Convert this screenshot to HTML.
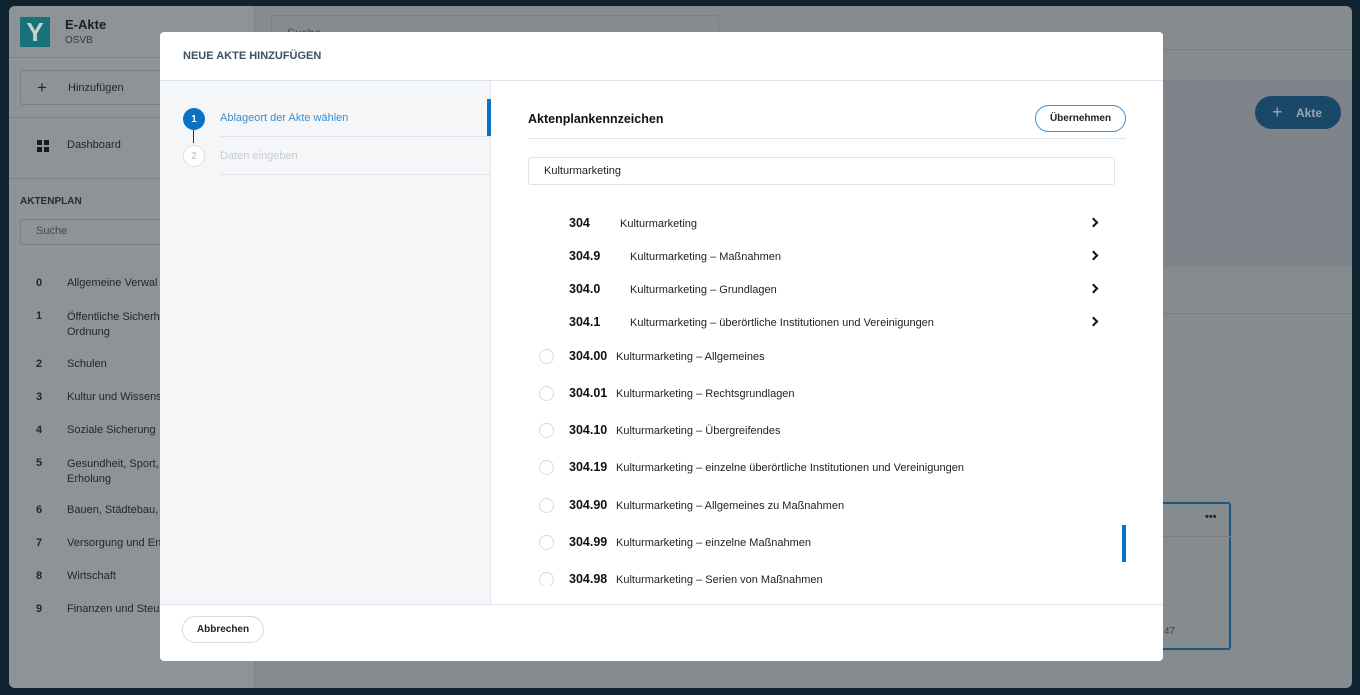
<!DOCTYPE html>
<html><head><meta charset="utf-8"><style>
*{box-sizing:border-box;margin:0;padding:0}
body{width:1360px;height:695px;background:#0f2230;font-family:"Liberation Sans",sans-serif;position:relative;overflow:hidden;color:#222}
.abs{position:absolute}
.app{left:9px;top:6px;width:1343px;height:682px;background:#868b90;border-radius:6px;overflow:hidden}
.side{left:0;top:0;width:246px;height:682px;background:#8e9397;border-right:1px solid #7c8185}
.t{position:absolute;font-size:11px;color:#22272c}
.num{font-weight:bold}
.modal{left:160px;top:32px;width:1003px;height:629px;background:#fff;border-radius:4px;overflow:hidden}
.row{position:absolute;font-size:11px;color:#222}
.row b{font-size:12.5px;color:#111;position:absolute}
.radio{position:absolute;width:15px;height:15px;border:1px solid #d5dbe2;border-radius:50%}
.chev{position:absolute;width:7px;height:7px;border-right:2px solid #111;border-top:2px solid #111;transform:rotate(45deg)}
.btn{display:flex;align-items:center;justify-content:center;font-size:10px;font-weight:bold;color:#222}
</style></head><body>
<div class="abs app">
 <div class="abs side">
  <div class="abs" style="left:11px;top:11px;width:30px;height:30px;background:#17727a;color:#c8d0d3;font-size:26px;font-weight:bold;text-align:center;line-height:30px">Y</div>
  <div class="t" style="left:56px;top:11px;font-size:13px;font-weight:bold;color:#1a1f24">E-Akte</div>
  <div class="t" style="left:56px;top:29px;font-size:10px;color:#33393f">OSVB</div>
  <div class="abs" style="left:0;top:51px;width:246px;border-top:1px solid #7c8185"></div>
  <div class="abs" style="left:11px;top:64px;width:160px;height:35px;border:1px solid #7a7f83;border-radius:3px"></div>
  <div class="t" style="left:28px;top:72px;font-size:17px">+</div>
  <div class="t" style="left:59px;top:76px">Hinzufügen</div>
  <div class="abs" style="left:0;top:111px;width:246px;border-top:1px solid #7c8185"></div>
  <div class="abs" style="left:28px;top:134px;width:5px;height:5px;background:#1a1a1a;box-shadow:7px 0 #1a1a1a,0 7px #1a1a1a,7px 7px #1a1a1a"></div>
  <div class="t" style="left:58px;top:133px">Dashboard</div>
  <div class="abs" style="left:0;top:172px;width:246px;border-top:1px solid #7c8185"></div>
  <div class="t" style="left:11px;top:190px;font-size:10px;font-weight:bold;color:#252c32">AKTENPLAN</div>
  <div class="abs" style="left:11px;top:213px;width:160px;height:26px;border:1px solid #7a7f83;border-radius:3px"></div>
  <div class="t" style="left:27px;top:219px;color:#444a50">Suche</div>
  <div class="t num" style="left:27px;top:271px">0</div><div class="t" style="left:58px;top:271px">Allgemeine Verwal</div>
  <div class="t num" style="left:27px;top:304px">1</div><div class="t" style="left:58px;top:304px;line-height:15px">Öffentliche Sicherh<br>Ordnung</div>
  <div class="t num" style="left:27px;top:352px">2</div><div class="t" style="left:58px;top:352px">Schulen</div>
  <div class="t num" style="left:27px;top:385px">3</div><div class="t" style="left:58px;top:385px">Kultur und Wissens</div>
  <div class="t num" style="left:27px;top:418px">4</div><div class="t" style="left:58px;top:418px">Soziale Sicherung</div>
  <div class="t num" style="left:27px;top:451px">5</div><div class="t" style="left:58px;top:451px;line-height:15px">Gesundheit, Sport,<br>Erholung</div>
  <div class="t num" style="left:27px;top:498px">6</div><div class="t" style="left:58px;top:498px">Bauen, Städtebau,</div>
  <div class="t num" style="left:27px;top:531px">7</div><div class="t" style="left:58px;top:531px">Versorgung und En</div>
  <div class="t num" style="left:27px;top:564px">8</div><div class="t" style="left:58px;top:564px">Wirtschaft</div>
  <div class="t num" style="left:27px;top:597px">9</div><div class="t" style="left:58px;top:597px">Finanzen und Steu</div>
 </div>
 <div class="abs" style="left:262px;top:9px;width:448px;height:34px;border:1px solid #7a7f83;border-radius:3px"></div>
 <div class="t" style="left:278px;top:20px;color:#444a50;font-size:12px">Suche</div>
 <div class="abs" style="left:247px;top:43px;width:1096px;border-top:1px solid #7a7f83"></div>
 <div class="abs" style="left:261px;top:74px;width:1082px;height:186px;background:#7f848a"></div>
 <div class="abs" style="left:1246px;top:90px;width:86px;height:33px;border-radius:17px;background:#1a4868"></div>
 <div class="t" style="left:1263px;top:96px;font-size:18px;color:#9aa6ae">+</div>
 <div class="t" style="left:1287px;top:100px;font-size:12px;font-weight:bold;color:#9aa6ae">Akte</div>
 <div class="abs" style="left:247px;top:307px;width:1096px;border-top:1px solid #7a7f83"></div>
 <div class="abs" style="left:1140px;top:496px;width:82px;height:148px;border:2px solid #1c5580;border-radius:3px"></div>
 <div class="abs" style="left:1154px;top:530px;width:68px;border-top:1px solid #7a7f83"></div>
 <div class="t" style="left:1196px;top:505px;font-weight:bold">•••</div>
 <div class="t" style="left:1155px;top:620px;font-size:10px;color:#444">47</div>
</div>

<div class="abs modal">
 <div class="t" style="left:23px;top:18px;font-size:11px;font-weight:bold;color:#3d4f63">NEUE AKTE HINZUFÜGEN</div>
 <div class="abs" style="left:0;top:48px;width:1003px;border-top:1px solid #dde3ea"></div>
 <div class="abs" style="left:0;top:49px;width:331px;height:523px;background:#f4f6f8;border-right:1px solid #e3e7ec"></div>
 <div class="abs" style="left:327px;top:67px;width:4px;height:38px;background:#0a72c4"></div>
 <div class="abs" style="left:33px;top:97px;width:1px;height:14px;background:#333"></div>
 <div class="abs btn" style="left:23px;top:76px;width:22px;height:22px;border-radius:50%;background:#0a72c4;color:#fff">1</div>
 <div class="t" style="left:60px;top:80px;color:#3d8fd0">Ablageort der Akte wählen</div>
 <div class="abs" style="left:60px;top:104px;width:271px;border-top:1px solid #dfe4ea"></div>
 <div class="abs btn" style="left:23px;top:113px;width:22px;height:22px;border-radius:50%;background:#fff;border:1px solid #dde2e8;color:#ccc">2</div>
 <div class="t" style="left:60px;top:118px;color:#c8cdd2">Daten eingeben</div>
 <div class="abs" style="left:60px;top:142px;width:271px;border-top:1px solid #dfe4ea"></div>

 <div class="t" style="left:368px;top:80px;font-size:12.5px;font-weight:bold;color:#111">Aktenplankennzeichen</div>
 <div class="abs btn" style="left:875px;top:73px;width:91px;height:27px;border:1px solid #3d8fd0;border-radius:14px">Übernehmen</div>
 <div class="abs" style="left:368px;top:106px;width:598px;border-top:1px solid #dfe4ea"></div>
 <div class="abs" style="left:368px;top:125px;width:587px;height:28px;border:1px solid #dde2e8;border-radius:3px"></div>
 <div class="t" style="left:384px;top:133px;color:#222">Kulturmarketing</div>

 <div class="row" style="left:0;top:184px;width:1000px"><b style="left:409px">304</b><span style="position:absolute;left:460px;top:2px">Kulturmarketing</span><i class="chev" style="left:930px;top:3px"></i></div>
 <div class="row" style="left:0;top:217px;width:1000px"><b style="left:409px">304.9</b><span style="position:absolute;left:470px;top:2px">Kulturmarketing – Maßnahmen</span><i class="chev" style="left:930px;top:3px"></i></div>
 <div class="row" style="left:0;top:250px;width:1000px"><b style="left:409px">304.0</b><span style="position:absolute;left:470px;top:2px">Kulturmarketing – Grundlagen</span><i class="chev" style="left:930px;top:3px"></i></div>
 <div class="row" style="left:0;top:283px;width:1000px"><b style="left:409px">304.1</b><span style="position:absolute;left:470px;top:2px">Kulturmarketing – überörtliche Institutionen und Vereinigungen</span><i class="chev" style="left:930px;top:3px"></i></div>

 <div class="row" style="left:0;top:317px;width:1000px"><i class="radio" style="left:379px;top:0"></i><b style="left:409px">304.00</b><span style="position:absolute;left:456px;top:2px">Kulturmarketing – Allgemeines</span></div>
 <div class="row" style="left:0;top:354px;width:1000px"><i class="radio" style="left:379px;top:0"></i><b style="left:409px">304.01</b><span style="position:absolute;left:456px;top:2px">Kulturmarketing – Rechtsgrundlagen</span></div>
 <div class="row" style="left:0;top:391px;width:1000px"><i class="radio" style="left:379px;top:0"></i><b style="left:409px">304.10</b><span style="position:absolute;left:456px;top:2px">Kulturmarketing – Übergreifendes</span></div>
 <div class="row" style="left:0;top:428px;width:1000px"><i class="radio" style="left:379px;top:0"></i><b style="left:409px">304.19</b><span style="position:absolute;left:456px;top:2px">Kulturmarketing – einzelne überörtliche Institutionen und Vereinigungen</span></div>
 <div class="row" style="left:0;top:466px;width:1000px"><i class="radio" style="left:379px;top:0"></i><b style="left:409px">304.90</b><span style="position:absolute;left:456px;top:2px">Kulturmarketing – Allgemeines zu Maßnahmen</span></div>
 <div class="row" style="left:0;top:503px;width:1000px"><i class="radio" style="left:379px;top:0"></i><b style="left:409px">304.99</b><span style="position:absolute;left:456px;top:2px">Kulturmarketing – einzelne Maßnahmen</span></div>
 <div class="abs" style="left:0;top:540px;width:1000px;height:14px;overflow:hidden"><div class="row" style="left:0;top:0;width:1000px"><i class="radio" style="left:379px;top:0"></i><b style="left:409px">304.98</b><span style="position:absolute;left:456px;top:2px">Kulturmarketing – Serien von Maßnahmen</span></div></div>
 <div class="abs" style="left:962px;top:493px;width:4px;height:37px;background:#0a72c4"></div>

 <div class="abs" style="left:0;top:572px;width:1003px;border-top:1px solid #dde3ea"></div>
 <div class="abs btn" style="left:22px;top:584px;width:82px;height:27px;border:1px solid #d5dbe2;border-radius:14px">Abbrechen</div>
</div>
</body></html>
